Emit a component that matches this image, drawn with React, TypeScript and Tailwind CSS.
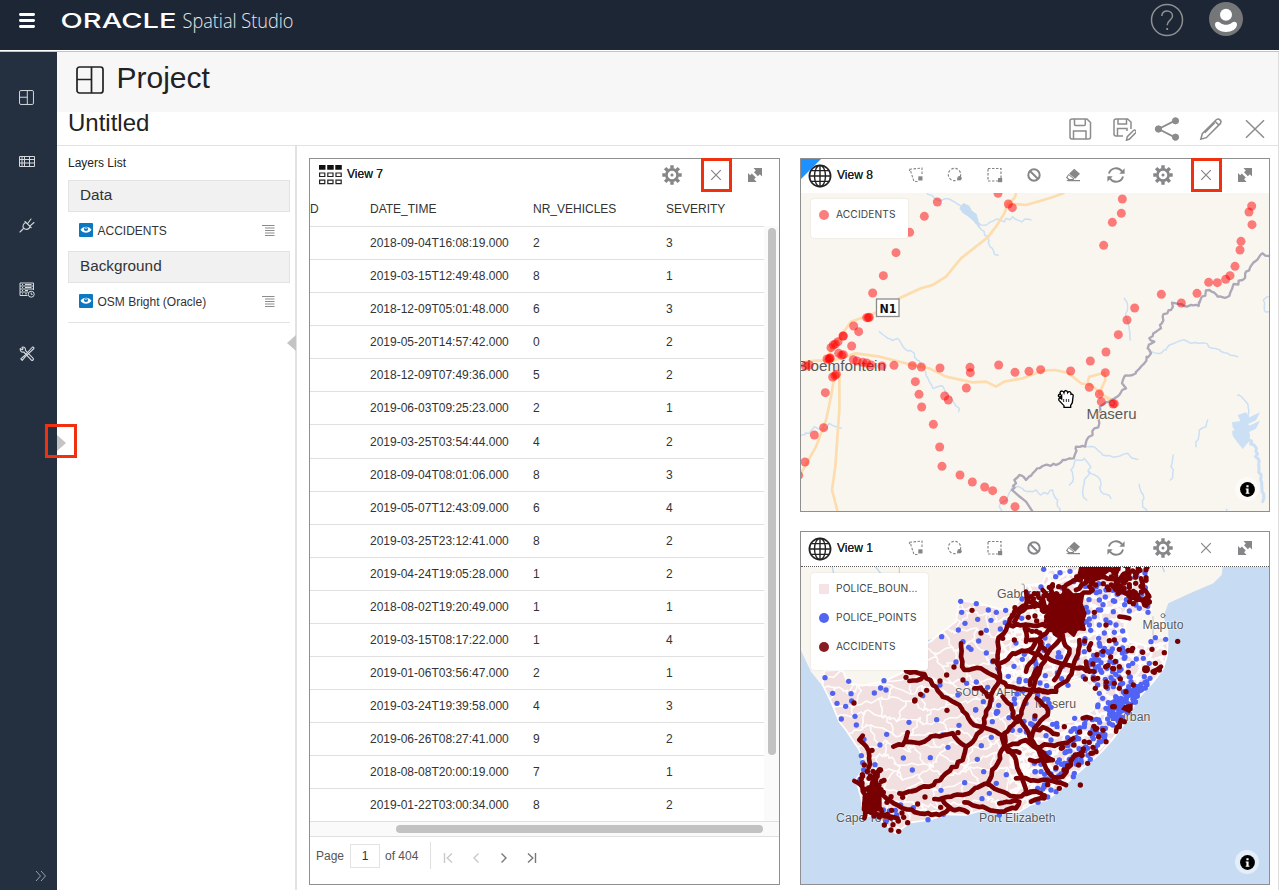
import React from "react";

type P = [number, number];

/* ---------- helpers for the map drawings ---------- */

const parse = (s: string): P[] =>
  s.trim().split(/\s+/).map((p) => p.split(",").map(Number) as P);

const Dots = ({ at, r, fill, opacity = 1 }: { at: string; r: number; fill: string; opacity?: number }) => (
  <g fill={fill} fillOpacity={opacity}>
    {parse(at).map(([x, y], i) => (
      <circle key={i} cx={x} cy={y} r={r} />
    ))}
  </g>
);

function rng(seed: number) {
  let s = seed;
  return () => {
    s = (s * 1664525 + 1013904223) % 4294967296;
    return s / 4294967296;
  };
}

/* Splits every segment into short steps and displaces the inner points */
function wobble(points: string, amp: number, step: number, seed: number): string {
  const rand = rng(seed * 7919 + 13);
  for (let i = 0; i < 3; i++) rand();
  const pts = parse(points);
  const out: string[] = [`${pts[0][0]},${pts[0][1]}`];
  for (let i = 1; i < pts.length; i++) {
    const [ax, ay] = pts[i - 1];
    const [bx, by] = pts[i];
    const n = Math.max(1, Math.round(Math.hypot(bx - ax, by - ay) / step));
    for (let k = 1; k < n; k++) {
      const t = k / n;
      out.push(
        `${(ax + (bx - ax) * t + (rand() - 0.5) * amp).toFixed(1)},${(ay + (by - ay) * t + (rand() - 0.5) * amp).toFixed(1)}`,
      );
    }
    out.push(`${bx},${by}`);
  }
  return out.join(" ");
}

const Lines = ({ paths, amp = 0, step = 12 }: { paths: string[]; amp?: number; step?: number }) => (
  <>
    {paths.map((p, i) => (
      <polyline key={i} points={amp ? wobble(p, amp, step, i + 1) : p} />
    ))}
  </>
);

/* Irregular honeycomb of district borders */
function mesh(x0: number, y0: number, x1: number, y1: number, size: number, seed: number): string {
  const rand = rng(seed);
  const cols = Math.ceil((x1 - x0) / size) + 1;
  const rows = Math.ceil((y1 - y0) / size) + 1;
  const v: P[][] = [];
  for (let j = 0; j < rows; j++) {
    v.push([]);
    for (let i = 0; i < cols; i++)
      v[j].push([x0 + i * size + (rand() - 0.5) * size * 1.1, y0 + j * size + (rand() - 0.5) * size * 1.1]);
  }
  const seg = (a: P, b: P) => {
    let d = `M${a[0].toFixed(0)} ${a[1].toFixed(0)}`;
    for (let k = 1; k < 5; k++) {
      const t = k / 5;
      d += `L${(a[0] + (b[0] - a[0]) * t + (rand() - 0.5) * size * 0.3).toFixed(0)} ${(a[1] + (b[1] - a[1]) * t + (rand() - 0.5) * size * 0.3).toFixed(0)}`;
    }
    return d + `L${b[0].toFixed(0)} ${b[1].toFixed(0)}`;
  };
  let d = "";
  for (let j = 0; j < rows; j++)
    for (let i = 0; i < cols; i++) {
      if (i + 1 < cols) d += seg(v[j][i], v[j][i + 1]);
      if (j + 1 < rows && (i + j) % 2 === 0) d += seg(v[j][i], v[j + 1][i]);
    }
  return d;
}

function inside([x, y]: P, poly: P[]) {
  let c = false;
  for (let i = 0, j = poly.length - 1; i < poly.length; j = i++) {
    const [xi, yi] = poly[i];
    const [xj, yj] = poly[j];
    if (yi > y !== yj > y && x < ((xj - xi) * (y - yi)) / (yj - yi) + xi) c = !c;
  }
  return c;
}

function scatter(area: string, n: number, seed: number): string {
  const poly = parse(area);
  const xs = poly.map((p) => p[0]);
  const ys = poly.map((p) => p[1]);
  const rand = rng(seed);
  const out: string[] = [];
  let guard = 0;
  while (out.length < n && guard++ < 5000) {
    const p: P = [
      Math.min(...xs) + rand() * (Math.max(...xs) - Math.min(...xs)),
      Math.min(...ys) + rand() * (Math.max(...ys) - Math.min(...ys)),
    ];
    if (inside(p, poly)) out.push(`${p[0].toFixed(0)},${p[1].toFixed(0)}`);
  }
  return out.join(" ");
}

/* ---------- icons ---------- */

const ProjectIcon = ({ className }: { className: string }) => (
  <svg viewBox="0 0 28 28" className={className} fill="none" stroke="currentColor" strokeWidth="1.7">
    <rect x="1" y="1" width="26" height="26" rx="2.500" />
    <path d="M15.5 1v26M1 13.5h14.5" />
  </svg>
);

const TableIcon = () => (
  <svg viewBox="0 0 16 11" className="h-[11px] w-4" fill="none" stroke="#d5d9dd">
    <path d="M.5.5h15v10H.5zM.5 3.500h15M.5 7h15M3 .5v10M5.5.5v10M10.500.5v10" strokeWidth="1" />
  </svg>
);

const PlugIcon = () => (
  <svg viewBox="0 0 16 16" className="size-4" fill="none" stroke="#d5d9dd" strokeLinecap="round" strokeLinejoin="round">
    <path d="M1 15l3-3M6 4.5l6.200 6.200M6.800 5.400C4.500 6.200 3.500 8.800 4.200 10.500l1.600 1.600c1.900.6 4.300-.2 5.400-2.600M8.500 6.800L12 2M10.800 9.200L15 5.500" strokeWidth="1.1" />
  </svg>
);

const JobsIcon = () => (
  <svg viewBox="0 0 16 16" className="size-4" fill="none" stroke="#d5d9dd" strokeWidth="1">
    <path d="M8.500 13.500H1V1h13.500v7M1 4h13.500M1 7h13.500M1 10h8M3 2.500h1M6 2.500h6.500M3 5.500h1M6 5.500h6.500M3 8.500h1M6 8.500h3M3 11.800h1M6 11.800h2" />
    <circle cx="12.200" cy="12.200" r="3" />
    <path d="M12.200 10.500v1.900h1.400" />
  </svg>
);

const ToolsIcon = () => (
  <svg viewBox="0 0 16 16" className="size-4" fill="none" stroke="#d5d9dd" strokeWidth="1.1" strokeLinejoin="round">
    <path d="M14.700 1.200l-1.200-.2-7.800 8.500-3.900 3.300 1.400 1.500 3.400-3.900 8.300-7.900z" />
    <path d="M1.300 2.500l1.800 1.300 1-.9L3 1.200c2-.7 4 .8 3.400 3.200l7.800 8c.9 1-.8 2.700-1.800 1.700L4.800 6C2.500 6.700.7 4.700 1.300 2.500z" />
  </svg>
);

const EyeIcon = () => (
  <svg viewBox="0 0 14 14" className="size-3.5">
    <rect width="14" height="14" rx="1" fill="#0b78c2" />
    <path d="M1.500 6.800C4 2.800 10 2.800 12.500 6.800 10 10.800 4 10.800 1.500 6.800z" fill="#fff" />
    <circle cx="7" cy="6" r="2.100" fill="#0b78c2" />
    <path d="M5.800 5.200h2.400" stroke="#fff" strokeWidth=".8" />
  </svg>
);

const MenuLines = () => (
  <svg viewBox="0 0 13 11" className="h-[11px] w-[13px]" stroke="#8c8c8c" strokeWidth="1">
    <path d="M0 .5h12.500M3 3h9.500M3 5.500h9.500M3 8h9.500M3 10.500h9.500" />
  </svg>
);

const GridIcon = () => (
  <svg viewBox="0 0 23 20" className="h-5 w-[23px]" fill="none" stroke="#222">
    <path d="M0 0h6.500v4.800H0zM8.200 0h6.500v4.800H8.200zM16.300 0h6.500v4.800h-6.500z" fill="#111" stroke="none" />
    <path d="M.6 8h5.200v3.500H.6zM8.800 8H14v3.500H8.800zM17 8h5.200v3.500H17zM.6 15.200h5.200v3.500H.6zM8.800 15.200H14v3.500H8.800zM17 15.200h5.200v3.500H17z" strokeWidth="1.200" />
  </svg>
);

const Globe = () => (
  <svg viewBox="0 0 24 24" className="relative size-6" fill="none" stroke="#222" strokeWidth="1.400">
    <circle cx="12" cy="12" r="10.600" strokeWidth="1.700" />
    <ellipse cx="12" cy="12" rx="5.500" ry="10.600" />
    <path d="M12 1v22M1.400 12h21.200M2.900 6.600h18.200M2.900 17.400h18.200" />
  </svg>
);

const Gear = () => (
  <svg viewBox="0 0 20 20" className="size-5" fill="none" stroke="#858688">
    <circle cx="10" cy="10" r="5.600" strokeWidth="2.700" />
    <circle cx="10" cy="10" r="1.500" fill="#858688" stroke="none" />
    <g strokeWidth="3.400">
      <path d="M10 .3v3.400M10 16.300v3.400M.3 10h3.400M16.300 10h3.400M3.140 3.140l2.400 2.400M14.460 14.460l2.400 2.400M3.140 16.860l2.400-2.400M14.460 5.540l2.400-2.400" />
    </g>
  </svg>
);

const CloseIcon = () => (
  <svg viewBox="0 0 20 20" className="size-5" stroke="#858585" strokeWidth="1.200">
    <path d="M5.200 5.200l9.600 9.600M14.800 5.200l-9.600 9.600" />
  </svg>
);

const ExpandIcon = () => (
  <svg viewBox="0 0 20 20" className="size-5" fill="#858688">
    <path d="M8.500 3h8.500v8.500l-2.200-2.200-1.900 1.900-3.900-3.900 1.800-1.900zM3 8l2.200 2.200 1.600-1.600 4 4-1.700 1.700 2.500 2.700H3z" />
  </svg>
);

const PolySelect = () => (
  <svg viewBox="0 0 20 20" className="size-5" fill="none" stroke="#858688" strokeWidth="1.100">
    <path d="M16 9V3L4 4.200l4 12.300h4" strokeDasharray="2.500 1.500" />
    <path d="M4 4.200L2.800 7" strokeDasharray="2 1" />
    <path d="M12.300 11.300h4.200v4.200h-4.200z" fill="#858688" stroke="none" />
  </svg>
);

const CircleSelect = () => (
  <svg viewBox="0 0 20 20" className="size-5" fill="none" stroke="#858688" strokeWidth="1.200">
    <circle cx="9.500" cy="9.500" r="6.200" strokeDasharray="2.500 1.700" />
    <circle cx="14.500" cy="13.200" r="2.200" fill="#858688" stroke="none" />
  </svg>
);

const RectSelect = () => (
  <svg viewBox="0 0 20 20" className="size-5" fill="none" stroke="#858688" strokeWidth="1.200">
    <path d="M3 3.500h13V16H3z" strokeDasharray="2.500 1.500" />
    <path d="M13 13h4.200v4.200H13z" fill="#858688" stroke="none" />
  </svg>
);

const BanIcon = () => (
  <svg viewBox="0 0 20 20" className="size-5" fill="none" stroke="#858688" strokeWidth="2">
    <circle cx="10" cy="10" r="5.700" />
    <path d="M6 6l8 8" />
  </svg>
);

const EraserIcon = () => (
  <svg viewBox="0 0 20 20" className="size-5" fill="#858688">
    <path d="M11.200 3.700l5.800 5.100-4.700 4.900-6.200-5z" />
    <path d="M5.600 9l6 4.800-1.400 1.400H5.500L3 12.500zM3 15h14v1.300H5z" />
    <path d="M5.700 10.300L4.500 12.300l1.800 1.700h3.200l.5-.4z" fill="#fff" />
  </svg>
);

const RefreshIcon = () => (
  <svg viewBox="0 0 20 20" className="size-5" fill="none" stroke="#858688" strokeWidth="1.900">
    <path d="M3 8.500C4.500 2.700 12.500 1.300 16 6.500M17 11.500c-1.500 5.800-9.500 7.200-13 2" />
    <path d="M18.600 3.300v5.400h-5.300zM1.400 16.700v-5.400h5.300z" fill="#858688" stroke="none" />
  </svg>
);

/* ---------- panel pieces ---------- */

const RedBox = ({ className }: { className: string }) => (
  <div className={"pointer-events-none absolute border-[3px] border-[#f0310f] " + className} />
);

const MapToolbar = ({ title, active = false }: { title: string; active?: boolean }) => (
  <div
    className={
      "relative flex h-[34px] shrink-0 items-center bg-white pl-[7px] " +
      (active ? "pb-px" : "box-content border-b border-dotted border-[#555]")
    }
  >
    {active && (
      <svg viewBox="0 0 20 20" className="absolute left-0 top-0 size-5">
        <path d="M0 0h20L0 20z" fill="#1e90ff" />
      </svg>
    )}
    <Globe />
    <div className="flex items-center pb-[2px]">
      <span className="ml-[5px] w-[69px] text-[12px] text-[#222] [text-shadow:0_0_0.500px_#222]">{title}</span>
      <PolySelect />
      <span className="ml-[19px]"><CircleSelect /></span>
      <span className="ml-5"><RectSelect /></span>
      <span className="ml-[19px]"><BanIcon /></span>
      <span className="ml-[19px]"><EraserIcon /></span>
      <span className="ml-[23px]"><RefreshIcon /></span>
      <span className="ml-[27px]"><Gear /></span>
      <span className="relative ml-[23px]">
        <CloseIcon />
        {active && <RedBox className="-left-[5px] -top-[7px] h-[34px] w-[31px]" />}
      </span>
      <span className="ml-[19px]"><ExpandIcon /></span>
    </div>
  </div>
);

const LegendText = ({ children }: { children: React.ReactNode }) => (
  <span className="font-['Inter',sans-serif] text-[10.200px] tracking-[0.120px] text-[#444]">{children}</span>
);

const InfoButton = () => (
  <div className="absolute bottom-[10px] right-[10px] flex size-6 items-center justify-center rounded-full bg-white/50">
    <svg viewBox="0 0 14 14" className="size-[15px]">
      <circle cx="7" cy="7" r="6.900" fill="#000" />
      <path d="M6 3h2v1.800H6zM5.300 6H8v4h.8v1H5.300v-1H6V7h-.7z" fill="#fff" />
    </svg>
  </div>
);

/* ---------- map of View 8 ---------- */

const MaseruMap = () => (
  <svg viewBox="801 193 468 318" className="h-full w-full bg-[#f9f6f0]" fontFamily="'Liberation Sans', Arial, sans-serif">
    <g transform="translate(796 150) scale(.33333)" fill="none" strokeLinejoin="round" strokeLinecap="round">
      <g stroke="#cbe0f4" strokeWidth="4.500">
        <Lines
          amp={9}
          step={10}
          paths={[
            "390,125 425,150 465,150 490,165 510,185 540,220 575,222 600,208 625,215 650,200 670,212 705,210",
            "545,225 575,260 582,290 606,316",
            "985,445 995,470 990,500 1000,540 1003,570",
            "1420,440 1402,450 1405,480 1420,485",
            "250,545 275,565 310,570 325,595 355,610 375,645 390,670 400,695 410,715 440,708 455,735 475,760 490,775 488,785",
            "15,855 40,850 55,830 85,840 100,820 135,835",
            "1060,605 1095,610 1120,585 1160,570 1185,580 1220,578 1250,595 1285,608 1325,620",
            "1325,735 1345,750 1357,775 1352,800 1345,830",
            "1235,810 1230,830 1210,840 1200,890",
            "1132,915 1125,950 1132,960 1123,990",
            "875,890 900,895 920,915 960,920 995,910 1010,925 1025,928",
            "838,930 825,960 832,985 820,1005",
            "838,930 865,925 880,945 880,970 865,990 860,1030 872,1050",
            "880,965 905,980 915,1000 915,1025 945,1045",
            "1030,1003 1042,1035 1040,1060 1052,1085",
            "650,1005 695,1025 720,1020 735,1035 770,1020 785,1050 792,1085",
            "650,1010 635,1040 610,1070 618,1085",
            "1292,1078 1292,1085",
          ]}
        />
        <polyline points={wobble("1345,835 1380,905 1388,945 1395,980 1400,1055", 10, 9, 4)} strokeWidth="9" />
      </g>
      <path d="M490 175l12-16 18 8 8 15 14 10 12 45-20-22-12-12-22-14z" fill="#c6dcf2" />
      <path d="M1308 842l25-4-8-18 25-8 10 15 32-15-12 24-30 14 8 25-18 22-16-20-14-20z" fill="#cbe0f4" transform="translate(0 -25)" />
      <path d="M1308 842l25-4-8-18 25-8 10 15 32-15-12 24-30 14 8 25-18 22-16-20-14-20z" fill="#cbe0f4" />
      <g stroke="#fddcae" strokeWidth="8">
        <Lines
          paths={[
            "802,130 760,145 690,165 635,160 625,190 600,230 575,262 495,325 450,380 410,405 375,415 310,445 235,490 165,515 140,550 110,590 90,630",
            "660,130 655,145 637,160",
            "15,637 60,632 110,632 180,610 250,620 340,643 400,655 450,680 530,697 570,695 600,710 625,695 680,685 740,662 775,660 815,668 855,700 885,705 940,750",
            "875,695 880,680 925,668 928,690 910,730 950,750",
            "120,650 105,740 90,810 60,890 15,970",
            "130,650 130,780 125,850 118,950 108,1020 125,1085",
          ]}
        />
      </g>
      <g stroke="#aca8b7" strokeWidth="7">
        <Lines
          amp={10}
          step={9}
          paths={[
            "1420,318 1400,310 1390,320 1350,365 1340,390 1310,410 1300,438 1265,440 1240,420 1215,445 1208,468 1165,468 1128,458 1125,480 1100,500 1095,535 1080,545 1060,565 1075,575 1055,595 1065,610 1045,640 1020,665 1010,675 985,680 978,700 990,715 970,735 940,755 920,765 905,795 910,820 895,835 875,865 868,890 840,890 833,925 800,930 780,945 740,948 710,970 690,990 670,975 655,990 660,1000 648,1020",
          ]}
        />
        <Lines paths={["648,1020 665,1035 690,1055 710,1085"]} />
      </g>
    </g>
    <g fill="#5a5a5a" stroke="#f9f6f0" strokeWidth="1.500" paintOrder="stroke">
      <text x="797" y="371" fontSize="15" textLength="89" lengthAdjust="spacingAndGlyphs">Bloemfontein</text>
      <text x="1086.500" y="418.500" fontSize="15" textLength="50" lengthAdjust="spacingAndGlyphs">Maseru</text>
    </g>
    <rect x="876.500" y="299" width="22.500" height="17.500" fill="#fff" stroke="#8b8b8b" strokeWidth="1.300" />
    <text x="879.500" y="312.500" fontSize="12" fontWeight="bold" fill="#111" fontFamily="'DejaVu Sans', sans-serif" textLength="17" lengthAdjust="spacingAndGlyphs">N1</text>
    <circle cx="1112" cy="403" r="2.500" fill="none" stroke="#888" />
    <g transform="translate(796 150) scale(.33333)">
      <Dots
        r={13.5}
        fill="#ff0000"
        opacity={0.5}
        at="424,156 385,199 341,247 300,308 262,377 230,429 217,503 212,503 220,502 173,528 188,545 606,130 637,162 649,173 979,147 976,190 949,217 923,286 1367,168 1359,186 1368,224 1335,274 1332,300 1317,349 1302,377 1289,388 1264,398 1238,397 1203,430 1156,459 1096,433 1016,474 993,510 967,554"
      />
    </g>
    <g transform="translate(796 330) scale(.33333)">
      <Dots
        r={13.5}
        fill="#ff0000"
        opacity={0.5}
        at="141,18 142,18 167,48 126,35 118,42 112,45 105,53 128,70 137,76 142,74 93,87 101,85 103,84 99,88 172,89 183,93 200,97 212,99 225,105 258,108 294,106 349,107 376,111 432,114 522,112 523,128 608,105 511,174 657,127 699,124 734,119 824,123 883,93 930,66 928,128 880,172 910,192 916,215 951,222 955,221 110,141 117,137 121,133 88,188 358,155 369,193 377,231 446,198 457,210 412,283 431,351 438,409 492,435 529,456 566,471 590,482 623,511 657,530 83,293 55,315 27,396 8,436 28,108 40,105"
      />
      <path
        d="M797 197l-5 5c-8-3-6-10 2-8l-2-6c2-7 10-6 12 0 2-9 10-8 11 0 4-6 11-3 10 5 5-2 8 2 6 8l-2 17-5 8v6h-20v-5l-15-16c-3-7 3-8 8-4z"
        fill="#fff"
        stroke="#000"
        strokeWidth="4"
      />
      <path d="M803 216v-9M811 216v-9M818 216v-9" stroke="#000" strokeWidth="2.500" />
    </g>
  </svg>
);

/* ---------- map of View 1 ---------- */

const COAST =
  "12,370 45,440 85,490 105,530 130,590 150,615 190,675 205,725 180,765 195,815 205,875 235,870 270,900 300,925 340,893 400,885 450,868 510,870 560,855 620,865 670,860 702,840 752,825 792,795 822,765 867,725 917,680 952,640 982,600 1012,545 1022,525 1072,470 1102,430 1117,370 1117,310 1102,275 1117,235 1182,205 1252,175 1277,150 1282,110 12,110";

const DISTRICTS =
  "85,437 140,435 155,475 200,482 262,470 325,440 325,400 402,350 440,320 480,290 490,225 550,235 640,260 680,215 690,180 740,175 760,120 1055,120 1065,250 1062,262 1020,260 985,300 1000,350 1060,365 1072,340 1115,335 1113,390 1102,430 1072,470 1022,525 1012,545 982,600 952,640 917,680 867,725 822,765 792,795 752,825 702,840 670,860 620,865 560,855 510,870 450,868 400,885 340,893 300,925 270,900 235,870 205,875 195,815 180,765 205,725 190,675 150,615 130,590 105,530 80,480";

const LESOTHO = "852,460 902,500 905,525 892,555 860,575 832,590 782,595 755,570 745,545 757,510 792,490 820,470";

const EAST = "740,110 1060,110 1065,262 985,300 1000,360 1115,335 1100,435 1020,520 975,610 860,730 750,825 640,840 640,660 740,590 860,580 900,510 850,455 740,500 600,480 600,330";

const ROADS = [
  "330,438 385,447 410,480 440,515 490,540 525,592 560,605 620,632 625,665",
  "340,468 375,462 385,450",
  "495,355 495,395 505,435 555,430 600,455 612,468 660,490 720,497 780,500",
  "690,200 690,240 655,260 640,295 605,350 605,400 612,460 585,510 570,570 560,610",
  "612,415 650,385 700,375 740,330 790,290",
  "535,490 555,488 575,515",
  "620,515 645,540 650,575 665,590 700,510 720,460 755,385 800,330 820,385 775,465",
  "690,440 715,400 735,350",
  "660,590 625,625 625,665",
  "665,575 690,610 702,640 740,700 750,730 770,755 800,755 825,720 830,700 860,680",
  "200,632 190,645 218,678 218,728",
  "292,665 320,660 335,622 328,650 370,655 420,632 470,625 510,665 500,705 440,755 400,785 310,805",
  "510,665 560,610",
  "625,665 605,715 575,775 500,810 415,822",
  "575,778 620,800 660,815 720,800",
  "630,665 660,705 675,750 690,800",
  "625,665 690,645 730,675 770,705",
  "625,670 670,683",
  "660,760 770,768 810,780",
  "702,705 770,705",
  "245,800 280,825 320,850 370,865 430,870 460,850 515,862",
  "440,825 465,850",
  "505,832 560,845 610,860 660,850 670,830 610,835",
  "720,665 800,655 832,640",
  "702,650 715,612 750,610 785,628",
  "722,520 750,545 755,570 715,610",
  "702,800 735,805 745,820 705,830",
  "850,345 840,400 820,455 790,480 780,500 702,497",
  "702,380 740,400 850,430 895,440",
  "702,345 730,345 755,385",
  "725,430 702,480",
  "640,300 700,300 800,300",
  "655,290 670,262 720,240 800,260",
  "700,230 740,240 800,260",
  "690,350 690,300",
  "740,195 770,230 800,260",
  "725,205 745,240",
  "770,178 760,215 800,260 810,180 860,150 900,130",
  "810,215 855,210 890,195 880,185",
  "840,195 880,165 920,150 935,135",
  "860,125 900,150 970,165 980,150",
  "940,130 960,150 960,180 1000,215",
  "995,130 1000,145 985,175",
  "1000,200 1035,225 1060,215 1040,190 1035,160",
  "1025,210 1045,240",
  "800,260 860,270 845,310",
  "800,260 760,310 800,340",
  "205,880 215,830 190,775 175,768",
  "225,830 225,790 245,740 255,735",
  "220,800 250,780 240,850 285,880",
  "215,860 250,870 305,880",
  "885,355 880,375",
  "870,410 880,440",
  "970,275 1000,280",
  "860,580 885,580",
  "975,585 960,620",
  "1070,440 1095,425",
];

const BLUE_WEST =
  "494,229 541,236 577,255 601,262 629,256 678,222 695,206 497,262 545,283 585,286 507,295 571,316 487,315 437,335 501,350 548,348 518,367 525,373 571,384 480,411 679,403 654,424 637,454 670,463 690,467 512,475 541,471 575,487 655,522 486,510 539,554 602,560 608,541 87,458 158,469 264,467 270,495 254,489 235,504 110,505 165,506 167,528 123,535 149,544 380,512 432,480 177,574 181,600 136,582 272,628 252,660 339,592 422,584 489,601 440,630 322,699 349,735 403,698 456,667 544,703 556,662 563,740 506,773 435,796 601,775 580,805 558,821 631,749 539,555 601,565 605,560 589,590 639,578 672,616 586,637 718,740 196,692 200,713 204,643 203,735 214,741 237,719 192,763 352,848 396,884 262,855 280,858 298,856 302,870 270,890 314,840 442,868 610,870 562,530 587,525 605,430 628,293 613,312 677,280 690,535 590,410";

const BLUE_EAST =
  "743,133 779,155 792,143 822,139 735,186 798,189 833,170 850,158 898,185 930,195 910,225 952,260 1000,258 1056,262 1020,240 1030,250 880,282 895,275 930,285 910,300 942,293 960,300 980,318 955,322 925,324 908,340 865,355 960,355 985,345 865,380 910,355 925,370 920,390 945,380 990,380 1065,350 1078,338 1109,343 788,383 908,405 960,410 1038,380 1042,400 1060,415 1010,415 985,400 880,300 732,474 752,482 755,523 862,455 895,465 950,440 970,437 1000,455 1045,455 1005,470 1062,460 1052,470 980,475 935,490 905,480 910,505 920,520 906,540 930,550 950,560 960,530 975,520 990,520 1010,510 710,600 750,632 765,645 750,685 760,683 812,680 822,678 715,715 735,718 790,705 805,715 735,740 717,740 855,705 835,745 832,755 883,703 725,790 740,792 765,795 780,800 755,816 726,832 840,700 865,605 836,580 905,545 945,560 952,580 928,610 950,600 900,620 910,650 875,670 770,598 782,595 783,605 832,612 845,622";

const RED_SPOTS =
  "528,256 555,324 474,426 452,450 432,468 501,465 392,496 374,508 357,525 174,534 330,457 453,556 356,528 486,623 387,816 365,837 434,847 657,248 695,220 620,340 655,345 592,408 285,815 320,817 335,893 308,919 265,900 285,915 262,802 250,737 200,753 205,720 228,676 1145,349 853,780 717,273 705,215 803,187 800,215 895,262 930,300 955,345 944,396 1010,370 997,376 1040,382 1068,373 1105,383 1078,415 1090,435 1075,442 970,425 950,430 973,462 970,490 990,500 905,460 898,490 868,462 930,485 955,475 1012,480 950,545 717,573 805,605 865,650 834,660 882,625 902,610 908,635 930,650 900,680 885,685 875,715 780,728 790,790 745,812 955,545 985,590 970,605";

const SouthAfricaMap = () => (
  <svg viewBox="801 567 468 317" className="h-full w-full bg-[#c7dcf2]" fontFamily="'Liberation Sans', Arial, sans-serif">
    <defs>
      <clipPath id="districts"><polygon points={DISTRICTS} /></clipPath>
      <clipPath id="east"><polygon points={EAST} /></clipPath>
    </defs>
    <g transform="translate(796 525) scale(.33333)" strokeLinejoin="round" strokeLinecap="round" fill="none">
      <polygon points={COAST} fill="#f9f6ef" />
      <path d="M310 110v60M1071 275v55" stroke="#c9c5cb" strokeWidth="3" />
      <path d="M105 110l8 35M238 125l20 25M390 350l45-15M1100 128l5 12" stroke="#bcd7f0" strokeWidth="4" />
      <polygon points={DISTRICTS} fill="#f2e0e0" stroke="#fff" strokeWidth="5" />
      <g clipPath="url(#districts)" stroke="#fffdfc">
        <path d={mesh(70, 200, 700, 940, 42, 17)} strokeWidth="4.500" />
        <g clipPath="url(#east)">
          <path d={mesh(590, 110, 1130, 860, 22, 5)} strokeWidth="8" />
        </g>
      </g>
      <polygon points={LESOTHO} fill="#f9f6ef" stroke="#fff" strokeWidth="4" />
      <path d="M685 195v-12q0-8-7-6" stroke="#999" strokeWidth="3" />
      <circle cx="1101" cy="272" r="6" stroke="#777" strokeWidth="3" />
    </g>
    <g fill="#5a5a5a" fontSize="12.300" stroke="#fff" strokeOpacity=".5" strokeWidth="1.500" paintOrder="stroke">
      <text x="997" y="598">Gaborone</text>
      <text x="1142.500" y="628.500">Maputo</text>
      <text x="1035" y="707.500">Maseru</text>
      <text x="1110" y="720.500">Durban</text>
      <text x="955" y="696" textLength="82" fontSize="11" lengthAdjust="spacingAndGlyphs">SOUTH AFRICA</text>
      <text x="836" y="821.500">Cape Town</text>
      <text x="979" y="822">Port Elizabeth</text>
    </g>
    <g transform="translate(796 525) scale(.33333)" strokeLinejoin="round" strokeLinecap="round" fill="none">
      <Dots at={BLUE_WEST} r={8} fill="#5163ee" />
      <Dots at={BLUE_EAST} r={8} fill="#5163f5" />
      <Dots at={scatter("860,330 900,360 1000,370 1060,420 1000,500 920,490 870,440", 40, 3)} r={8} fill="#5163f5" />
      <Dots at={scatter("1072,460 1022,525 1010,550 975,590 940,570 935,530 990,495 1030,480", 85, 9)} r={8} fill="#5163f5" />
      <Dots at={scatter("830,585 900,555 970,590 940,640 850,720 760,810 720,780 800,680", 70, 21)} r={8} fill="#5163f5" />
      <Dots at={scatter("860,130 1050,130 1060,260 960,250 870,330 840,230", 50, 31)} r={8} fill="#5163f5" />
      <Dots at={scatter("620,350 760,330 860,400 850,450 720,620 640,640", 34, 47)} r={8} fill="#5163f5" />
      <g stroke="#780003" strokeWidth="14">
        <Lines paths={ROADS} amp={9} step={13} />
      </g>
      <g fill="#780003">
        <path d="M770 205l25 8 20-18 15 15 30-2-5 28 12 30-8 25 6 22-22-2-10 20-18-15-30 12-15-30-22-8 8-30z" stroke="#780003" strokeWidth="10" />
        <path d="M850 122l90-5 5 20-25 15-20 0-15 18-25-8-20 10z" />
        <path d="M205 815l25-18 22 12 0 35-25 22-25-12z" stroke="#780003" strokeWidth="10" />
        <path d="M985 540l25-5 0 20-10 10-25-12z" />
        <circle cx="1050" cy="433" r="12" />
      </g>
      <Dots at={RED_SPOTS} r={8} fill="#780003" />
      <Dots at={scatter("860,120 1055,120 1062,245 1010,240 960,200 900,190 830,160", 75, 77)} r={8} fill="#780003" />
      <Dots at={scatter("640,250 720,200 780,160 860,300 840,330 660,330", 42, 51)} r={8} fill="#780003" />
      <Dots at={scatter("860,330 980,340 1040,400 960,490 860,460", 14, 12)} r={8} fill="#780003" />
      <Dots at={scatter("850,600 960,570 910,680 800,770 740,790 760,700", 18, 90)} r={8} fill="#780003" />
      <Dots at={scatter("200,740 250,730 280,800 330,880 300,910 215,865 180,770", 38, 63)} r={8} fill="#780003" />
    </g>
  </svg>
);

/* ---------- data ---------- */

const ROWS: [string, number, number][] = [
  ["2018-09-04T16:08:19.000", 2, 3],
  ["2019-03-15T12:49:48.000", 8, 1],
  ["2018-12-09T05:01:48.000", 6, 3],
  ["2019-05-20T14:57:42.000", 0, 2],
  ["2018-12-09T07:49:36.000", 5, 2],
  ["2019-06-03T09:25:23.000", 2, 1],
  ["2019-03-25T03:54:44.000", 4, 2],
  ["2018-09-04T08:01:06.000", 8, 3],
  ["2019-05-07T12:43:09.000", 6, 4],
  ["2019-03-25T23:12:41.000", 8, 2],
  ["2019-04-24T19:05:28.000", 1, 2],
  ["2018-08-02T19:20:49.000", 1, 1],
  ["2019-03-15T08:17:22.000", 1, 4],
  ["2019-01-06T03:56:47.000", 2, 1],
  ["2019-03-24T19:39:58.000", 4, 3],
  ["2019-06-26T08:27:41.000", 9, 2],
  ["2018-08-08T20:00:19.000", 7, 1],
  ["2019-01-22T03:00:34.000", 8, 2],
];

/* ---------- page sections ---------- */

const Header = () => (
  <header className="flex h-[52px] shrink-0 border-b border-[#b5c7d6] bg-[#1c2635]">
    <div className="flex w-full items-start border-b border-white">
      <svg viewBox="0 0 16 15" className="ml-[19px] mt-[13px] h-[15px] w-4" stroke="#fff" strokeWidth="2.800" strokeLinecap="round">
        <path d="M1.400 1.500h13.200M1.400 7.500h13.200M1.400 13.500h13.200" />
      </svg>
      <svg viewBox="0 0 236 36" className="ml-[26px] mt-[4px] h-9 w-[236px] overflow-visible" fill="#fff">
        <text x="-.5" y="23.700" fontSize="20" fontWeight="500" fontFamily="Inter, sans-serif" textLength="116" lengthAdjust="spacingAndGlyphs">ORACLE</text>
        <text x="121.500" y="24" fontSize="20" fontWeight="300" fontFamily="'Open Sans', sans-serif" textLength="111" lengthAdjust="spacingAndGlyphs" fill="#e6e9ed">Spatial Studio</text>
      </svg>
      <svg viewBox="0 0 34 34" className="ml-[853px] mt-[3px] size-[34px]" fill="none" stroke="#8e9092" strokeWidth="1.500">
        <circle cx="17" cy="17" r="15.500" />
        <path d="M11.800 13c0-7 10.700-6.600 10.700 0 0 4.300-5.300 4-5.300 9.300" />
        <path d="M16.300 25h1.800v2h-1.800z" fill="#8e9092" stroke="none" />
      </svg>
      <svg viewBox="0 0 34 34" className="ml-[25px] mt-[2px] size-[34px]">
        <circle cx="17" cy="17" r="17" fill="#757678" />
        <circle cx="17" cy="12.800" r="6" fill="#fff" />
        <path d="M6 22.500c0-3 3.300-3.400 5.200-1.700 3.400 2.700 8.200 2.700 11.600 0 1.900-1.700 5.200-1.300 5.200 1.700 0 4.500-5.500 7.500-11 7.500S6 27 6 22.500z" fill="#fff" />
      </svg>
    </div>
  </header>
);

const Sidebar = () => (
  <nav className="flex w-[57px] shrink-0 flex-col items-center bg-[#243040] pt-[37px]">
    <div className="-ml-1 flex flex-1 flex-col items-center">
      <div className="flex h-16 items-start"><span className="flex h-4 items-center"><ProjectIcon className="size-[15px] text-[#e5e8ea]" /></span></div>
      <div className="flex h-16 items-start"><span className="flex h-4 items-center"><TableIcon /></span></div>
      <div className="flex h-16 items-start"><PlugIcon /></div>
      <div className="flex h-16 items-start pt-px"><JobsIcon /></div>
      <div className="flex h-16 items-start pt-px"><ToolsIcon /></div>
    </div>
    <svg viewBox="0 0 12 12" className="mb-[8px] ml-[25px] size-3" fill="none" stroke="#99a1ab" strokeWidth="1">
      <path d="M1 1l4.500 5L1 11M6 1l4.500 5L6 11" />
    </svg>
  </nav>
);

const ProjectBar = () => (
  <div className="flex h-[60px] shrink-0 items-start bg-[#f7f7f7] pl-[19px]">
    <ProjectIcon className="mt-[14px] size-7 text-[#222]" />
    <h1 className="ml-[12.500px] mt-[7px] text-[30px] leading-[38px] text-[#222]">Project</h1>
  </div>
);

const TitleBar = () => (
  <div className="flex h-[34px] shrink-0 items-start border-b border-[#e2e2e2] pl-[11px]">
    <h2 className="-mt-[4px] w-[1000px] text-[24px] leading-[30px] text-[#222]">Untitled</h2>
    <div className="flex items-center pt-[5px] text-[#8b8c8c]">
      <svg viewBox="0 0 24 24" className="size-6" fill="none" stroke="currentColor" strokeWidth="1.500">
        <path d="M2 4a2 2 0 0 1 2-2h15l3.500 3.500V20a2 2 0 0 1-2 2H4a2 2 0 0 1-2-2zM6.500 2v5.500a1 1 0 0 0 1 1h8.800a1 1 0 0 0 1-1V2M5.500 22v-8h12.500v8" />
      </svg>
      <svg viewBox="0 0 24 24" className="ml-5 size-6" fill="none" stroke="currentColor" strokeWidth="1.500">
        <path d="M11 19H4a2 2 0 0 1-2-2V4a2 2 0 0 1 2-2h11.500L19 5v7M6 2v5h8.500V2M5.500 19v-7.500h9.500v2.500M14.500 23.200l.8-3.600 6.400-6.300c1.300-.8 3 .8 2.200 2.200l-6.400 6.500z" />
      </svg>
      <svg viewBox="0 0 26 24" className="ml-[18px] h-6 w-[26px]" fill="currentColor" stroke="currentColor">
        <path d="M4.500 12L21 3.700M4.500 12L21 20.400" strokeWidth="1.900" />
        <circle cx="4.500" cy="12" r="3.200" />
        <circle cx="21.500" cy="3.800" r="3.100" />
        <circle cx="21.500" cy="20.200" r="3.100" />
      </svg>
      <svg viewBox="0 0 24 24" className="ml-[19px] size-6" fill="none" stroke="currentColor" strokeWidth="1.500">
        <path d="M1.800 22.200l1.500-5.500L17.500 2.500c2.300-1.800 5.700 1.500 4 3.900L7.300 20.700zM16 4.200l3.900 3.900M5.800 15.700l10-10" />
      </svg>
      <svg viewBox="0 0 24 24" className="ml-[20px] size-6" stroke="currentColor" strokeWidth="1.500">
        <path d="M3 3.200l18 17.600M21 3.200L3 20.800" />
      </svg>
    </div>
  </div>
);

const LayerGroup = ({ children }: { children: React.ReactNode }) => (
  <div className="h-[32px] border border-[#e3e3e3] bg-[#f1f1f1] pl-[11px] text-[15.300px] leading-[28px] text-[#333]">{children}</div>
);

const LayerRow = ({ name }: { name: string }) => (
  <div className="flex items-center pl-[11px] pr-[15px]">
    <EyeIcon />
    <span className="ml-[4.500px] flex-1 pt-[2px] text-[12px] text-[#333]">{name}</span>
    <MenuLines />
  </div>
);

const LayersPanel = () => (
  <aside className="relative w-[240px] shrink-0 border-r-2 border-[#e2e2e2] pl-[11px] pr-[5px] pt-[9px]">
    <h3 className="h-[25px] text-[12px] leading-4 text-[#222]">Layers List</h3>
    <LayerGroup>Data</LayerGroup>
    <div className="h-[39px] pt-[8px]"><LayerRow name="ACCIDENTS" /></div>
    <LayerGroup>Background</LayerGroup>
    <div className="h-[40px] border-b border-[#e3e3e3] pt-[8px]"><LayerRow name="OSM Bright (Oracle)" /></div>
    <svg viewBox="0 0 9 16" className="absolute -right-px top-[189px] h-4 w-[9px]"><path d="M9 0v16L0 8z" fill="#c4c4c4" /></svg>
    <svg viewBox="0 0 9 16" className="absolute left-0 top-[289px] h-4 w-[9px]"><path d="M0 0v16l9-8z" fill="#c4c4c4" /></svg>
    <RedBox className="-left-[12px] top-[278px] h-[34px] w-[32px]" />
  </aside>
);

const PagerIcon = ({ d, muted = false }: { d: string; muted?: boolean }) => (
  <svg viewBox="0 0 12 12" className="size-3" fill="none" stroke={muted ? "#c9c9c9" : "#777"} strokeWidth="1.400">
    <path d={d} />
  </svg>
);

const TablePanel = () => (
  <section className="flex h-[727px] w-[471px] shrink-0 flex-col border border-[#8f8f8f] bg-white">
    <div className="flex h-[33px] shrink-0 items-center pl-[9px] pb-px">
      <GridIcon />
      <span className="relative -top-px ml-[5px] w-[315px] text-[12px] text-[#222] [text-shadow:0_0_0.500px_#222]">View 7</span>
      <Gear />
      <span className="relative ml-[24px]">
        <CloseIcon />
        <RedBox className="-left-[5px] -top-[7px] h-[34px] w-[31px]" />
      </span>
      <span className="ml-[19px]"><ExpandIcon /></span>
    </div>
    <div className="grid h-[34px] shrink-0 grid-cols-[60px_163px_133px_1fr] items-center text-[12px] text-[#333]">
      <span>D</span>
      <span>DATE_TIME</span>
      <span>NR_VEHICLES</span>
      <span>SEVERITY</span>
    </div>
    <div className="flex shrink-0">
      <div className="w-[454px]">
        {ROWS.map(([date, vehicles, severity]) => (
          <div
            key={date}
            className="grid h-[33.080px] grid-cols-[60px_163px_133px_1fr] items-center border-t border-[#e0e0e0] text-[12px] text-[#333]"
          >
            <span />
            <span>{date}</span>
            <span>{vehicles}</span>
            <span>{severity}</span>
          </div>
        ))}
      </div>
      <div className="flex flex-1 justify-center bg-[#fafafa]">
        <div className="mt-[2px] h-[527px] w-2 rounded-full bg-[#c2c2c2]" />
      </div>
    </div>
    <div className="flex h-[16px] shrink-0 items-center border-y border-[#e0e0e0] bg-[#fafafa]">
      <div className="ml-[86px] h-2 w-[367px] rounded-full bg-[#c2c2c2]" />
    </div>
    <div className="flex items-start pl-[6px] pt-[5px] text-[12px] text-[#555]">
      <span className="mt-[5px]">Page</span>
      <span className="ml-[6px] mt-[2px] flex h-6 w-[30px] items-center justify-center border border-[#e3e3e3] text-[#333]">1</span>
      <span className="ml-[5px] mt-[5px] w-[45px]">of 404</span>
      <span className="h-[27px] w-px bg-[#dfdfdf]" />
      <div className="ml-[11px] mt-[10px] flex gap-4">
        <PagerIcon muted d="M2.500 1v10M10 1.500L5.200 6l4.800 4.500" />
        <PagerIcon muted d="M8.500 1.500L4 6l4.500 4.500" />
        <PagerIcon d="M3.500 1.500L8 6l-4.500 4.500" />
        <PagerIcon d="M9.500 1v10M2 1.500L6.800 6 2 10.500" />
      </div>
    </div>
  </section>
);

export default function App() {
  return (
    <div className="flex h-[890px] w-[1279px] flex-col overflow-hidden bg-white font-['Liberation_Sans',Arial,sans-serif]">
      <Header />
      <div className="flex min-h-0 flex-1">
        <Sidebar />
        <main className="flex min-w-0 flex-1 flex-col border-r border-[#dedede]">
          <ProjectBar />
          <TitleBar />
          <div className="flex min-h-0 flex-1">
            <LayersPanel />
            <div className="flex pl-[12px] pt-[12px]">
              <TablePanel />
              <div className="ml-5 flex flex-col gap-[19px]">
                <section className="flex h-[354px] w-[470px] flex-col border border-[#8f8f8f]">
                  <MapToolbar title="View 8" active />
                  <div className="relative min-h-0 flex-1 overflow-hidden">
                    <MaseruMap />
                    <div className="absolute left-[10px] top-[6px] h-[39px] w-[97px] rounded-[3px] bg-white px-2 pt-[8px] shadow-[0_0_2px_rgba(0,0,0,0.12)]">
                      <div className="flex h-[15px] items-center gap-[7px]">
                        <span className="size-[10px] rounded-full bg-[#fa8080]" />
                        <LegendText>ACCIDENTS</LegendText>
                      </div>
                    </div>
                    <InfoButton />
                  </div>
                </section>
                <section className="flex h-[354px] w-[470px] flex-col border border-[#8f8f8f]">
                  <MapToolbar title="View 1" />
                  <div className="relative min-h-0 flex-1 overflow-hidden">
                    <SouthAfricaMap />
                    <div className="absolute left-[10px] top-[6px] flex h-[97px] w-[117px] flex-col rounded-[3px] bg-white px-2 pt-px shadow-[0_0_2px_rgba(0,0,0,0.12)]">
                      <div className="flex h-[29px] items-center gap-[7px]">
                        <span className="size-[10px] bg-[#f5e3e5]" />
                        <LegendText>POLICE_BOUN...</LegendText>
                      </div>
                      <div className="flex h-[29px] items-center gap-[7px]">
                        <span className="size-[10px] rounded-full bg-[#5065f0]" />
                        <LegendText>POLICE_POINTS</LegendText>
                      </div>
                      <div className="flex h-[29px] items-center gap-[7px]">
                        <span className="size-[10px] rounded-full bg-[#861d20]" />
                        <LegendText>ACCIDENTS</LegendText>
                      </div>
                    </div>
                    <InfoButton />
                  </div>
                </section>
              </div>
            </div>
          </div>
        </main>
      </div>
    </div>
  );
}
